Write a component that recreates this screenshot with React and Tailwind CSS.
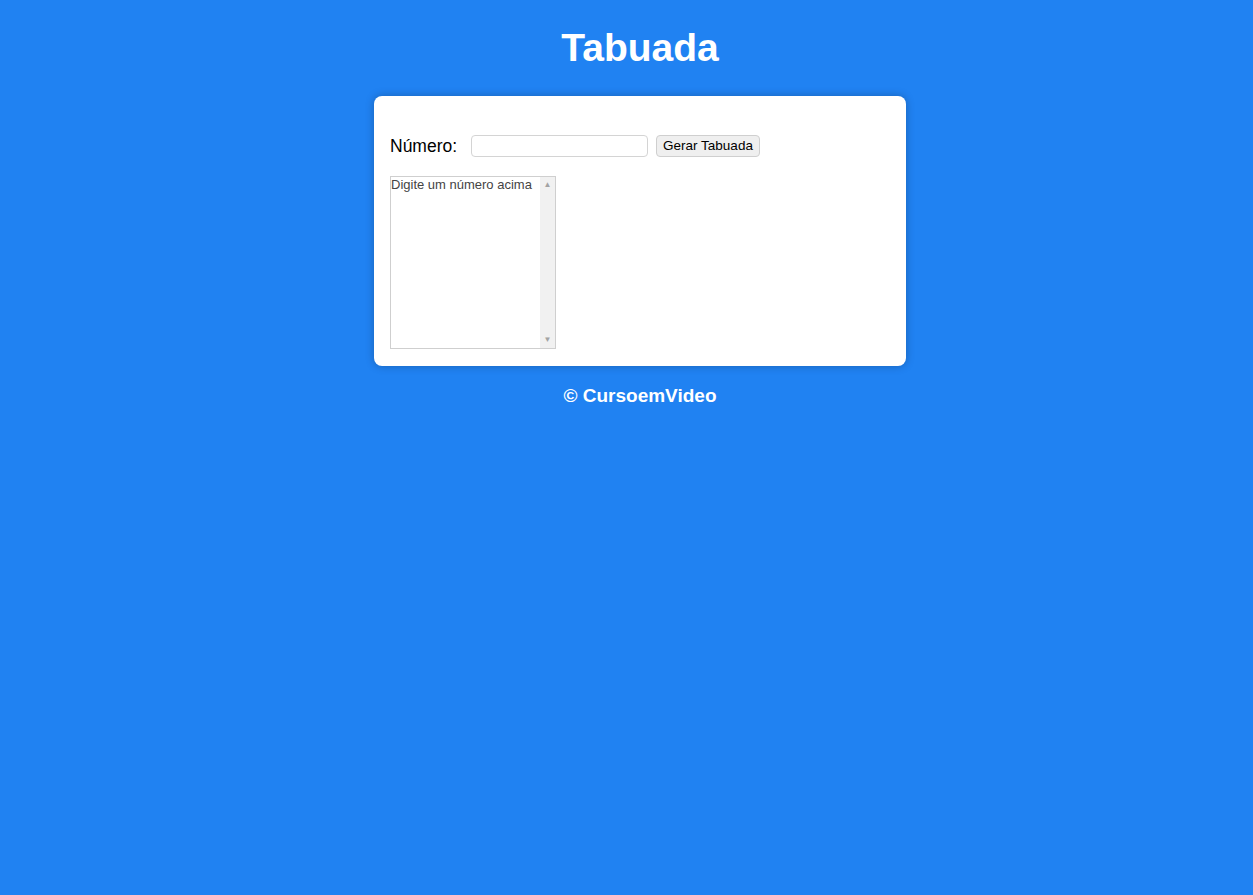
export default function App() {
  return (
    <div className="min-h-[895px] bg-[#2082f2] pl-[27px] font-['Liberation_Sans',Arial,sans-serif] text-black">
      <header className="pt-[22px] text-center">
        <h1 className="text-[39px] font-bold leading-[52px] text-white">Tabuada</h1>
      </header>

      <main className="mx-auto mt-[22px] w-[532px] rounded-lg bg-white px-4 pt-[37px] pb-[17px] shadow-[0_0_8px_rgba(0,0,0,0.25)]">
        <div className="flex items-center">
          <label htmlFor="txtn" className="mr-[8px] w-[73px] text-[17.5px]">Número:</label>
          <input
            id="txtn"
            type="number"
            className="h-[22px] w-[177px] rounded-sm border border-[#d4d4d4] px-1 text-[13px]"
          />
          <button className="ml-[8px] h-[22px] w-[104px] rounded-sm border border-[#cfcfcf] bg-[#efefef] text-[13.5px]">
            Gerar Tabuada
          </button>
        </div>

        {/* listbox with its scrollbar track */}
        <div className="mt-[17px] flex h-[173px] w-[166px] border border-[#cfcfcf]">
          <select size={10} className="flex-1 overflow-hidden text-[13px] text-[#444]">
            <option>Digite um número acima</option>
          </select>
          <div className="flex w-[15px] flex-col justify-between bg-[#f1f1f1] py-1 text-center text-[8px] leading-none text-[#a3a3a3]">
            <span>▲</span>
            <span>▼</span>
          </div>
        </div>
      </main>

      <footer className="mt-[16px] text-center">
        <p className="text-[19px] font-bold text-white">&copy; CursoemVideo</p>
      </footer>
    </div>
  );
}
